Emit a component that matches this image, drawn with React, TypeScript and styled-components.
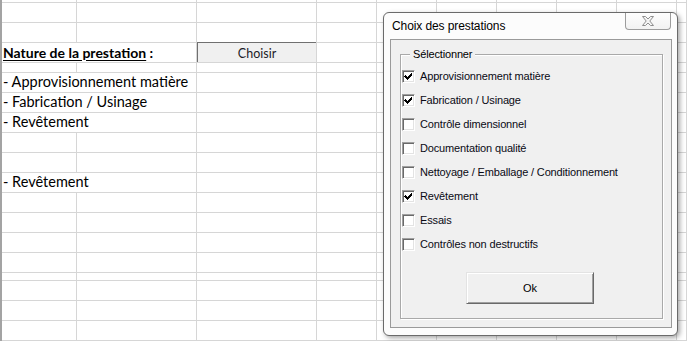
import React from "react";
import styled, { createGlobalStyle } from "styled-components";

const Global = createGlobalStyle`
  html, body { margin: 0; padding: 0; background: #ffffff; overflow: hidden; }
  body { width: 687px; height: 341px; }
  #root { position: relative; width: 687px; height: 341px; }
`;

const SHEET_FONT = `"Lato", "Open Sans", sans-serif`;
const UI_FONT = `"Liberation Sans", Arial, sans-serif`;

type RowSpec = { h: number; text?: string; nature?: boolean };

const ROWS: RowSpec[] = [
  { h: 3 },
  { h: 20 },
  { h: 20 },
  { h: 20, nature: true },
  { h: 10 },
  { h: 20, text: "- Approvisionnement matière" },
  { h: 20, text: "- Fabrication / Usinage" },
  { h: 20, text: "- Revêtement" },
  { h: 20 },
  { h: 20 },
  { h: 20, text: "- Revêtement" },
  { h: 20 },
  { h: 20 },
  { h: 20 },
  { h: 20 },
  { h: 8 },
  { h: 20 },
  { h: 20 },
  { h: 20 },
];

const COL_COUNT = 10;

const Sheet = styled.div<{ $rows: string }>`
  display: grid;
  grid-template-columns: 75px 120px 120px repeat(6, 60px) 1fr;
  grid-template-rows: ${(p) => p.$rows};
  width: 687px;
  height: 341px;
  border-left: 2px solid #a3a3a3;
  box-sizing: border-box;
  font-family: ${SHEET_FONT};
  color: #000;
`;

const Cell = styled.div<{ $span?: number }>`
  grid-column: span ${(p) => p.$span ?? 1};
  box-sizing: border-box;
  border-right: 1px solid #d6d6d6;
  border-bottom: 1px solid #d6d6d6;
  display: flex;
  align-items: center;
  min-width: 0;
  overflow: visible;
`;

const CellText = styled.span`
  font-size: 14.5px;
  line-height: 1;
  padding-left: 1px;
  white-space: nowrap;
`;

const Heading = styled.span`
  font-size: 14px;
  font-weight: 700;
  line-height: 1;
  padding-left: 1px;
  white-space: nowrap;
  & u {
    text-decoration-thickness: 1px;
    text-underline-offset: 2px;
  }
`;

const ChooseButton = styled.div`
  align-self: flex-start;
  margin-top: -1px;
  width: 119px;
  height: 20px;
  box-sizing: border-box;
  background: #f0f0f0;
  border-top: 1px solid #707070;
  border-left: 1px solid #707070;
  display: flex;
  align-items: center;
  justify-content: center;
  font-family: ${SHEET_FONT};
  font-size: 12.5px;
  color: #1c1c28;
  padding-top: 1px;
`;

/* ---------- Dialog ---------- */

const Window = styled.div`
  position: absolute;
  left: 383px;
  top: 12px;
  width: 295px;
  height: 324px;
  box-sizing: border-box;
  border: 1px solid #6a6a6a;
  border-radius: 6px;
  background: #fcfcfc;
  box-shadow: 2px 2px 5px rgba(0, 0, 0, 0.35);
  display: flex;
  flex-direction: column;
  padding: 0 5px 7px 6px;
  font-family: ${UI_FONT};
`;

const TitleBar = styled.div`
  height: 26px;
  display: flex;
  align-items: flex-start;
  justify-content: space-between;
  flex: none;
`;

const Title = styled.div`
  font-family: "Liberation Sans", "Open Sans", sans-serif;
  font-size: 12px;
  letter-spacing: -0.1px;
  color: #000;
  padding: 6px 0 0 2px;
  white-space: nowrap;
`;

const CloseButton = styled.div`
  width: 46px;
  height: 17px;
  margin-right: 1px;
  box-sizing: border-box;
  border: 1px solid #9c9c9c;
  border-top: none;
  border-radius: 0 0 4px 4px;
  background: linear-gradient(#fdfdfd, #f2f2f2);
  display: flex;
  align-items: center;
  justify-content: center;
  padding-bottom: 1px;
`;

const Client = styled.div`
  flex: 1;
  border: 1px solid #9a9a9a;
  background: #f0f0f0;
  padding: 14px 8px 8px 9px;
  display: flex;
  flex-direction: column;
`;

const GroupBox = styled.div`
  position: relative;
  flex: 1;
  border: 1px solid #a9a9a9;
  box-shadow: inset 1px 1px 0 #ffffff, 1px 1px 0 #ffffff;
  padding: 9px 0 0 1px;
  display: flex;
  flex-direction: column;
`;

const Legend = styled.span`
  position: absolute;
  left: 9px;
  top: -7px;
  padding: 0 3px;
  background: #f0f0f0;
  font-size: 11px;
  letter-spacing: -0.15px;
  line-height: 13px;
  color: #000;
`;

const CheckRow = styled.label`
  height: 24px;
  display: flex;
  align-items: center;
  gap: 5px;
  font-size: 11px;
  letter-spacing: -0.15px;
  color: #0a0a14;
  white-space: nowrap;
`;

const Box = styled.span`
  width: 13px;
  height: 13px;
  box-sizing: border-box;
  background: #ffffff;
  border: 1px solid;
  border-color: #a0a0a0 #ffffff #ffffff #a0a0a0;
  box-shadow: inset 1px 1px 0 #696969, inset -1px -1px 0 #e3e3e3;
  display: flex;
  align-items: center;
  justify-content: center;
  flex: none;
`;

const OkButton = styled.div`
  margin: 16px 0 0 64px;
  width: 128px;
  height: 32px;
  box-sizing: border-box;
  border: 1px solid;
  border-color: #e3e3e3 #696969 #696969 #e3e3e3;
  box-shadow: inset 1px 1px 0 #ffffff, inset -1px -1px 0 #a0a0a0;
  background: #f0f0f0;
  display: flex;
  align-items: center;
  justify-content: center;
  font-size: 11px;
  color: #000;
`;

const CheckMark = () => (
  <svg width="9" height="9" viewBox="0 0 9 9" shapeRendering="crispEdges">
    <path
      d="M1 3h1v1h1v1h1v-1h1v-1h1v-1h1v-1h1v3h-1v1h-1v1h-1v1h-1v1h-1v-1h-1v-1h-1v-1h-1z"
      fill="#000"
    />
  </svg>
);

const CloseGlyph = () => (
  <svg width="12" height="10" viewBox="0 0 12 10">
    <polygon
      points="0.5,0.5 3.5,0.5 6,3 8.5,0.5 11.5,0.5 7.8,5 11.5,9.5 8.5,9.5 6,7 3.5,9.5 0.5,9.5 4.2,5"
      fill="#f4f4f4"
      stroke="#8e8e8e"
      strokeWidth="1"
      strokeLinejoin="round"
    />
  </svg>
);

const OPTIONS: { label: string; checked: boolean }[] = [
  { label: "Approvisionnement matière", checked: true },
  { label: "Fabrication / Usinage", checked: true },
  { label: "Contrôle dimensionnel", checked: false },
  { label: "Documentation qualité", checked: false },
  { label: "Nettoyage / Emballage / Conditionnement", checked: false },
  { label: "Revêtement", checked: true },
  { label: "Essais", checked: false },
  { label: "Contrôles non destructifs", checked: false },
];

const empties = (n: number, key: string) =>
  Array.from({ length: n }, (_, i) => <Cell key={`${key}-${i}`} />);

export default function App() {
  const rowTemplate = ROWS.map((r) => `${r.h}px`).join(" ");
  return (
    <>
      <Global />
      <Sheet $rows={rowTemplate}>
        {ROWS.map((row, r) => {
          if (row.nature) {
            return (
              <React.Fragment key={r}>
                <Cell $span={2}>
                  <Heading>
                    <u>Nature de la prestation</u> :
                  </Heading>
                </Cell>
                <Cell>
                  <ChooseButton>Choisir</ChooseButton>
                </Cell>
                {empties(COL_COUNT - 3, `r${r}`)}
              </React.Fragment>
            );
          }
          if (row.text) {
            return (
              <React.Fragment key={r}>
                <Cell $span={2}>
                  <CellText>{row.text}</CellText>
                </Cell>
                {empties(COL_COUNT - 2, `r${r}`)}
              </React.Fragment>
            );
          }
          return <React.Fragment key={r}>{empties(COL_COUNT, `r${r}`)}</React.Fragment>;
        })}
      </Sheet>

      <Window>
        <TitleBar>
          <Title>Choix des prestations</Title>
          <CloseButton>
            <CloseGlyph />
          </CloseButton>
        </TitleBar>
        <Client>
          <GroupBox>
            <Legend>Sélectionner</Legend>
            {OPTIONS.map((o) => (
              <CheckRow key={o.label}>
                <Box>{o.checked && <CheckMark />}</Box>
                {o.label}
              </CheckRow>
            ))}
            <OkButton>Ok</OkButton>
          </GroupBox>
        </Client>
      </Window>
    </>
  );
}
